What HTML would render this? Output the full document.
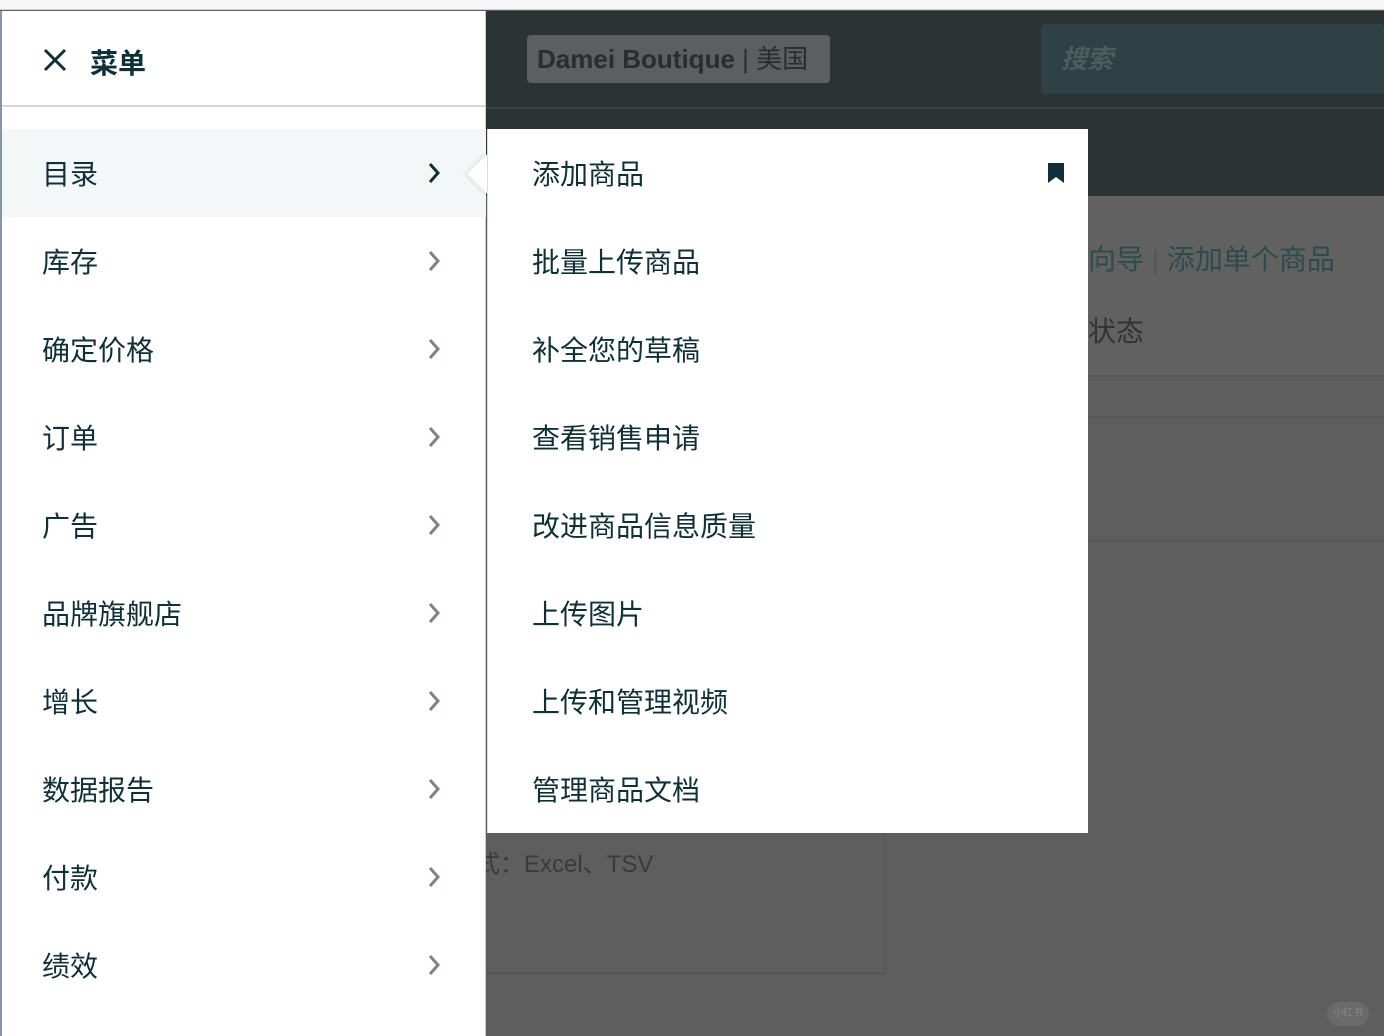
<!DOCTYPE html>
<html style="width:1384px;height:1036px;overflow:hidden"><head><meta charset="utf-8"><style>
*{margin:0;padding:0;box-sizing:border-box}
body{width:1384px;height:1036px;overflow:hidden;position:relative;background:#5e5e5e;font-family:"Liberation Sans","Noto Sans CJK SC",sans-serif;color:#0f3036}
.abs{position:absolute}
</style></head><body>
<div class="abs" style="left:0;top:0;width:1384px;height:10px;background:#f6f6f8;border-bottom:1px solid #d0d0d0"></div>
<div class="abs" style="left:486px;top:11px;width:898px;height:96px;background:#2c3335"></div>
<div class="abs" style="left:486px;top:107px;width:898px;height:2px;background:#3a4244"></div>
<div class="abs" style="left:486px;top:109px;width:898px;height:87px;background:#2c3335"></div>
<div class="abs" style="left:527px;top:35px;width:303px;height:48px;background:#5c5e5f;border-radius:4px;color:#2a2d2e;font-size:26px;font-weight:bold;line-height:48px;padding-left:10px;white-space:nowrap">Damei Boutique <span style="font-weight:normal">| 美国</span></div>
<div class="abs" style="left:1041px;top:24px;width:343px;height:70px;background:#2e4245;border-radius:3px;color:#4a5e60;font-size:26px;font-style:italic;line-height:70px;padding-left:20px;font-weight:bold">搜索</div>
<div class="abs" style="left:1088px;top:196px;width:296px;height:179px;background:#616161"></div>
<div class="abs" style="left:1088px;top:238px;font-size:28px;color:#2d4b4c;white-space:nowrap">向导 <span style="color:#555;font-weight:100">|</span> 添加单个商品</div>
<div class="abs" style="left:1088px;top:310px;font-size:28px;color:#333">状态</div>
<div class="abs" style="left:1088px;top:375px;width:296px;height:2px;background:#575757"></div>
<div class="abs" style="left:1088px;top:416px;width:296px;height:2px;background:#575757"></div>
<div class="abs" style="left:1088px;top:540px;width:296px;height:2px;background:#575757"></div>
<div class="abs" style="left:486px;top:833px;width:399px;height:141px;border-right:1px solid #555;border-bottom:2px solid #555"></div>
<div class="abs" style="left:476px;top:844px;font-size:24px;color:#3a3a3a;white-space:nowrap">式：Excel、TSV</div>
<div class="abs" style="left:1327px;top:1002px;width:42px;height:24px;border-radius:12px;background:#6a6a6a;color:#888;font-size:10px;line-height:24px;text-align:center;white-space:nowrap;overflow:hidden">小红书</div>

<div class="abs" style="left:0;top:11px;width:2px;height:1025px;background:#8a93a8"></div>
<div class="abs" style="left:2px;top:11px;width:484px;height:1025px;background:#fff;border-right:1px solid #ccc">
 <div style="height:96px;border-bottom:2px solid #d5d5d5;position:relative">
  <svg class="abs" style="left:40px;top:36px" width="26" height="26" viewBox="0 0 26 26"><path d="M3 3L23 23M23 3L3 23" stroke="#0f3036" stroke-width="3"/></svg>
  <div class="abs" style="left:88px;top:31px;font-size:28px;font-weight:bold">菜单</div>
 </div>
</div>
<div id="rows"></div>
<div class="abs" style="left:487px;top:129px;width:601px;height:704px;background:#fff"></div>
<div class="abs" style="left:473px;top:160px;width:28px;height:28px;background:#fff;transform:rotate(45deg);box-shadow:-2px 2px 4px rgba(0,0,0,0.08)"></div>
<div class="abs" style="left:487px;top:129px;width:30px;height:88px;background:#fff"></div>
<svg class="abs" style="left:1047px;top:162px" width="18" height="22" viewBox="0 0 18 22"><path d="M1 1H17V21L9 15L1 21Z" fill="#0f3036"/></svg>
<script>
var L=["目录","库存","确定价格","订单","广告","品牌旗舰店","增长","数据报告","付款","绩效"];
var R=["添加商品","批量上传商品","补全您的草稿","查看销售申请","改进商品信息质量","上传图片","上传和管理视频","管理商品文档"];
var h="";
L.forEach(function(t,i){var y=129+88*i;
h+='<div class="abs" style="left:2px;top:'+y+'px;width:484px;height:88px;'+(i==0?'background:#f3f7f8;':'')+'"></div>';
h+='<div class="abs" style="left:42px;top:'+(y+29)+'px;font-size:28px;line-height:34px">'+t+'</div>';
h+='<svg class="abs" style="left:426px;top:'+(y+33)+'px" width="16" height="22" viewBox="0 0 16 22"><path d="M4 2L12 11L4 20" fill="none" stroke="'+(i==0?'#0f3036':'#7d8485')+'" stroke-width="3"/></svg>';});
R.forEach(function(t,i){var y=129+88*i;
h+='<div class="abs" style="left:532px;top:'+(y+29)+'px;font-size:28px;line-height:34px;z-index:2">'+t+'</div>';});
document.getElementById("rows").outerHTML=h;
</script>
<div class="abs" style="left:487px;top:129px;width:1px;height:704px;background:#ddd"></div>
</body></html>
